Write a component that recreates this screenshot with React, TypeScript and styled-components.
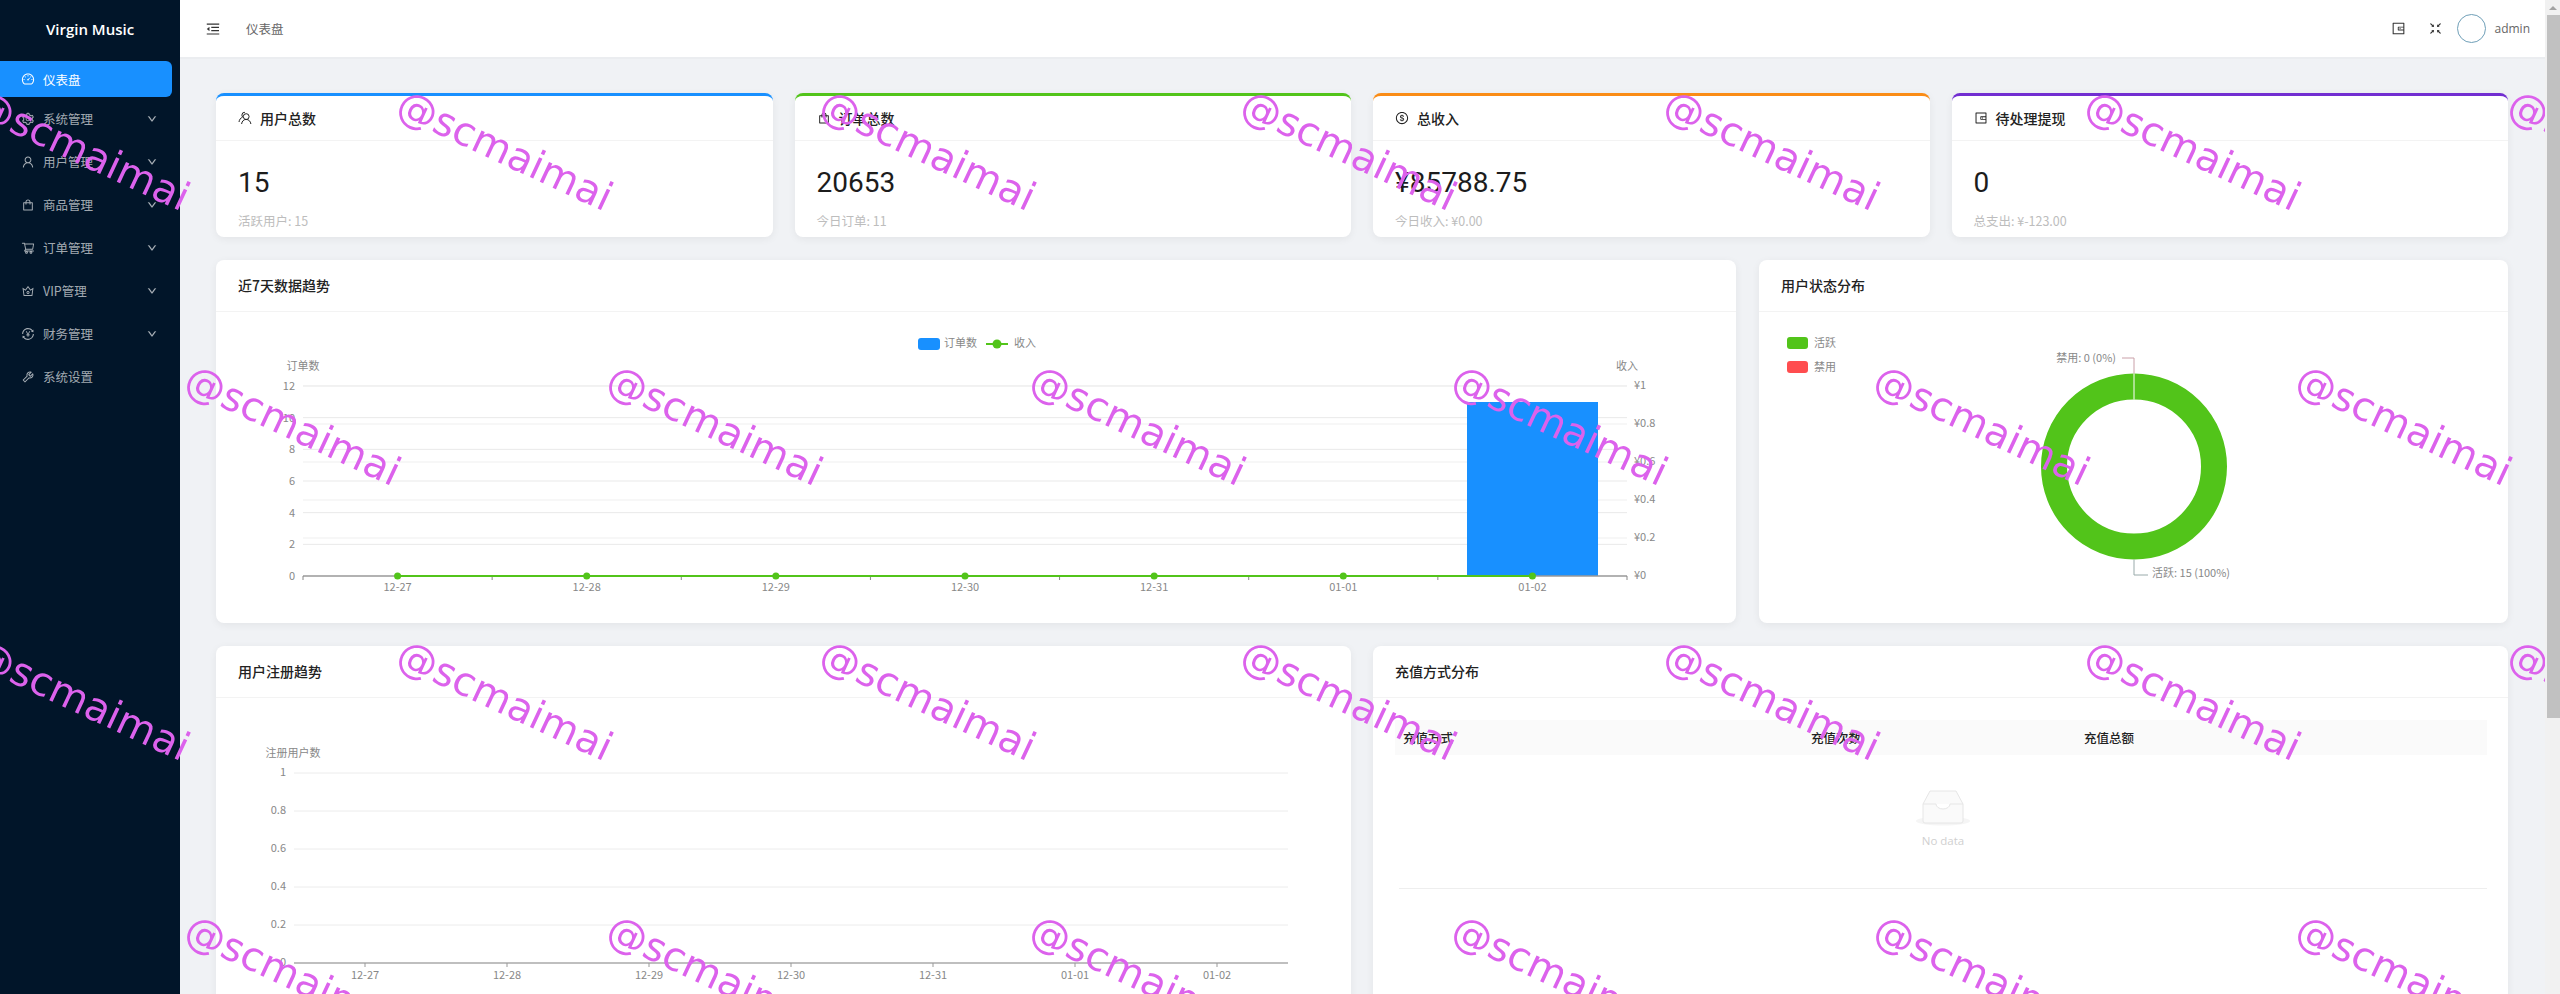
import React from "react";
import styled, { createGlobalStyle } from "styled-components";
import {
  AiOutlineDashboard, AiOutlineSetting, AiOutlineUser, AiOutlineShopping, AiOutlineShoppingCart,
  AiOutlineCrown, AiOutlineTransaction, AiOutlineTool, AiOutlineDown, AiOutlineMenuFold,
  AiOutlineWallet, AiOutlineFullscreenExit, AiOutlineDollar,
} from "react-icons/ai";

const CJK = `"Noto Sans CJK SC", "Noto Sans", sans-serif`;
const UI = `"Open Sans", "Noto Sans CJK SC", sans-serif`;

const Global = createGlobalStyle`
  * { box-sizing: border-box; }
  html, body { margin: 0; height: 100%; overflow: hidden; background: #f0f2f5; }
  body { font-family: ${CJK}; }
`;

const Page = styled.div`
  height: 100vh;
  overflow: hidden;
  display: flex;
  align-items: flex-start;
  background: #f0f2f5;
`;

const Rail = styled.div`
  width: 15px;
  height: 100vh;
  flex: none;
  background: #f1f1f1;
  display: flex;
  flex-direction: column;
  align-items: flex-end;
`;
const RailArrow = styled.span`
  width: 15px;
  height: 15px;
  flex: none;
  display: flex;
  align-items: center;
  justify-content: center;
  &::before {
    content: "";
    border-left: 4px solid transparent;
    border-right: 4px solid transparent;
    border-bottom: 4px solid #a3a3a3;
  }
`;
const RailThumb = styled.span`
  width: 13px;
  height: 703px;
  flex: none;
  background: #c1c1c1;
`;

const Sidebar = styled.aside`
  width: 180px;
  flex: none;
  height: 100vh;
  background: #011529;
  display: flex;
  flex-direction: column;
`;
const Logo = styled.div`
  height: 61px;
  padding-bottom: 3px;
  display: flex;
  align-items: center;
  justify-content: center;
  color: #fff;
  font: 600 15px ${UI};
`;
const MenuList = styled.nav`
  display: flex;
  flex-direction: column;
`;
const MenuItem = styled.div<{ $active?: boolean }>`
  height: ${(p) => (p.$active ? 36 : 39)}px;
  margin: ${(p) => (p.$active ? "0 8px 2px 0" : "0 8px 4px 0")};
  padding: 0 0 0 21px;
  display: flex;
  align-items: center;
  border-radius: ${(p) => (p.$active ? "0 6px 6px 0" : "0")};
  background: ${(p) => (p.$active ? "#1890ff" : "transparent")};
  color: ${(p) => (p.$active ? "#fff" : "rgba(255,255,255,.65)")};
  font-size: 12.5px;
  & > svg:first-child { font-size: 14px; margin-right: 8px; flex: none; }
`;
const Chevron = styled(AiOutlineDown)`
  margin-left: auto;
  margin-right: 15px;
  font-size: 10px;
  stroke: currentColor;
  stroke-width: 50;
`;

const Main = styled.div`
  flex: 1;
  min-width: 0;
  height: 100vh;
  overflow: hidden;
  display: flex;
  flex-direction: column;
`;
const Header = styled.header`
  height: 59px;
  flex: none;
  background: #fff;
  border-bottom: 2px solid #ebedf0;
  display: flex;
  align-items: center;
  padding: 0 15px 0 25px;
  color: #555;
`;
const FoldIcon = styled(AiOutlineMenuFold)`
  font-size: 16px;
  color: #333;
  margin-right: 25px;
`;
const Crumb = styled.span`
  font-size: 12.5px;
  color: #666;
`;
const HeaderRight = styled.div`
  margin-left: auto;
  display: flex;
  align-items: center;
`;
const HeaderIcon = styled.span<{ $gap: number }>`
  display: flex;
  font-size: 15px;
  color: #333;
  margin-right: ${(p) => p.$gap}px;
`;
const Avatar = styled.span`
  width: 29px;
  height: 29px;
  border-radius: 50%;
  border: 1px solid #6f9fb8;
  background: #fff;
  margin-right: 8px;
`;
const UserName = styled.span`
  font: 12px ${UI};
  color: #666;
`;

const Content = styled.main`
  padding: 34px 37px 36px 36px;
  display: flex;
  flex-direction: column;
  gap: 23px;
`;
const StatRow = styled.section`
  display: grid;
  grid-template-columns: repeat(4, 1fr);
  gap: 22px;
`;
const ChartRow = styled.section`
  display: grid;
  grid-template-columns: 1520px 1fr;
  gap: 23px;
`;
const BottomRow = styled.section`
  display: grid;
  grid-template-columns: 1fr 1fr;
  gap: 22px;
`;
const Card = styled.div<{ $accent?: string; $height: number }>`
  height: ${(p) => p.$height}px;
  background: #fff;
  border-radius: 8px;
  box-shadow: 0 2px 8px rgba(0, 0, 0, 0.06);
  ${(p) => (p.$accent ? `border-top: 3px solid ${p.$accent};` : "")}
  display: flex;
  flex-direction: column;
  overflow: hidden;
`;
const CardHead = styled.div<{ $height: number; $lift?: number }>`
  height: ${(p) => p.$height}px;
  flex: none;
  padding: 0 22px ${(p) => p.$lift ?? 0}px;
  display: flex;
  align-items: center;
  gap: 8px;
  border-bottom: 1px solid #f3f3f3;
  color: #222;
  font-size: 14px;
  font-weight: 500;
  & svg { font-size: 14px; }
`;
const StatBody = styled.div`
  padding: 24px 22px 0;
`;
const StatValue = styled.div`
  font: 400 28px/36px "Roboto", ${CJK};
  color: #1c1c1c;
`;
const StatNote = styled.div`
  margin-top: 12px;
  font-size: 12.5px;
  line-height: 16px;
  color: #bdbdbd;
`;
const ChartSvg = styled.svg`
  display: block;
  flex: 1;
  width: 100%;
  height: 100%;
`;
const ChartText = styled.text`
  font-family: ${CJK};
  font-size: 11px;
  fill: #888;
`;
const TableWrap = styled.div`
  padding: 22px 21px 0 22px;
`;
const TableHead = styled.div`
  height: 35px;
  display: grid;
  grid-template-columns: 408px 273px 1fr;
  align-items: center;
  background: #fafafa;
  font-size: 12.5px;
  font-weight: 500;
  color: #222;
  & > span { padding-left: 8px; }
`;
const Empty = styled.div`
  height: 134px;
  margin-left: 4px;
  border-bottom: 1px solid #eee;
  padding-top: 35px;
  display: flex;
  flex-direction: column;
  align-items: center;
  gap: 7px;
  font: 11.5px ${UI};
  color: #d0d0d0;
`;

const Watermarks = styled.div`
  position: fixed;
  left: 0;
  top: 0;
  width: 2545px;
  height: 100vh;
  overflow: hidden;
  pointer-events: none;
`;
const Mark = styled.span.attrs<{ $x: number; $y: number }>((p) => ({
  style: { left: p.$x, top: p.$y },
}))<{ $x: number; $y: number }>`
  position: absolute;
  transform: translate(-50%, -50%) rotate(25deg);
  font: 40px "DejaVu Sans", sans-serif;
  line-height: 1;
  white-space: nowrap;
  color: #dc62ec;
`;

const PeopleIcon = () => (
  <svg width="14" height="14" viewBox="0 0 14 14" fill="none" stroke="currentColor" strokeWidth="1">
    <circle cx="8.2" cy="5.6" r="2.9" />
    <path d="M3.6 13c.3-2.7 2.1-4.6 4.6-4.6s4.3 1.900 4.700 4.600" />
    <path d="M6.900 1.300A2.800 2.800 0 0 0 3.900 4c0 .8.3 1.500.8 2C2.600 6.900 1.300 8.700 1 11" />
  </svg>
);

const menu = [
  { icon: <AiOutlineDashboard />, label: "仪表盘", active: true },
  { icon: <AiOutlineSetting />, label: "系统管理", more: true },
  { icon: <AiOutlineUser />, label: "用户管理", more: true },
  { icon: <AiOutlineShopping />, label: "商品管理", more: true },
  { icon: <AiOutlineShoppingCart />, label: "订单管理", more: true },
  { icon: <AiOutlineCrown />, label: "VIP管理", more: true },
  { icon: <AiOutlineTransaction />, label: "财务管理", more: true },
  { icon: <AiOutlineTool />, label: "系统设置" },
];

const stats = [
  { accent: "#1890ff", icon: <PeopleIcon />, title: "用户总数", value: "15", note: "活跃用户: 15" },
  { accent: "#52c41a", icon: <AiOutlineShopping />, title: "订单总数", value: "20653", note: "今日订单: 11" },
  { accent: "#fa8c16", icon: <AiOutlineDollar />, title: "总收入", value: "¥85788.75", note: "今日收入: ¥0.00" },
  { accent: "#722ed1", icon: <AiOutlineWallet />, title: "待处理提现", value: "0", note: "总支出: ¥-123.00" },
];

const Trend = () => {
  const ox = 216, oy = 312;
  const X0 = 303 - ox, X1 = 1627 - ox, band = (X1 - X0) / 7;
  const Y0 = 576 - oy, Y1 = 386 - oy;
  const days = ["12-27", "12-28", "12-29", "12-30", "12-31", "01-01", "01-02"];
  const centers = days.map((_, i) => X0 + band * (i + 0.5));
  return (
    <ChartSvg>
      <rect x={918 - ox} y={338 - oy} width={22} height={12} rx={3} fill="#1890ff" />
      <ChartText x={944 - ox} y={347 - oy}>订单数</ChartText>
      <line x1={986 - ox} x2={1008 - ox} y1={344 - oy} y2={344 - oy} stroke="#52c41a" strokeWidth={2} />
      <circle cx={997 - ox} cy={344 - oy} r={4.5} fill="#52c41a" />
      <ChartText x={1014 - ox} y={347 - oy}>收入</ChartText>
      <ChartText x={X0} y={370 - oy} textAnchor="middle">订单数</ChartText>
      <ChartText x={X1} y={370 - oy} textAnchor="middle">收入</ChartText>
      {[0, 1, 2, 3, 4, 5, 6].map((i) => {
        const y = Y1 + ((Y0 - Y1) / 6) * i;
        return (
          <React.Fragment key={i}>
            {i < 6 && <line x1={X0} x2={X1} y1={y} y2={y} stroke="#e9e9e9" />}
            <ChartText x={295 - ox} y={y + 4} textAnchor="end">{12 - i * 2}</ChartText>
          </React.Fragment>
        );
      })}
      {[0, 1, 2, 3, 4, 5].map((i) => {
        const y = Y1 + ((Y0 - Y1) / 5) * i;
        return (
          <React.Fragment key={i}>
            {i < 5 && <line x1={X0} x2={X1} y1={y} y2={y} stroke="#efefef" />}
            <ChartText x={1634 - ox} y={y + 3}>{`¥${[1, 0.8, 0.6, 0.4, 0.2, 0][i]}`}</ChartText>
          </React.Fragment>
        );
      })}
      <rect x={1467 - ox} y={402 - oy} width={131} height={Y0 - (402 - oy)} fill="#1890ff" />
      <line x1={X0} x2={X1} y1={Y0} y2={Y0} stroke="#999" strokeWidth={1.5} />
      {[0, 1, 2, 3, 4, 5, 6, 7].map((i) => (
        <line key={i} x1={X0 + band * i} x2={X0 + band * i} y1={Y0} y2={Y0 + 4} stroke="#888" />
      ))}
      <line x1={centers[0]} x2={centers[6]} y1={Y0} y2={Y0} stroke="#52c41a" strokeWidth={2} />
      {centers.map((c, i) => (
        <React.Fragment key={i}>
          <circle cx={c} cy={Y0} r={3.5} fill="#52c41a" />
          <ChartText x={c} y={Y0 + 15} textAnchor="middle">{days[i]}</ChartText>
        </React.Fragment>
      ))}
    </ChartSvg>
  );
};

const Donut = () => {
  const ox = 1759, oy = 312;
  const cx = 2134 - ox, cy = 466.5 - oy;
  return (
    <ChartSvg>
      <rect x={1787 - ox} y={337 - oy} width={21} height={12} rx={3} fill="#52c41a" />
      <ChartText x={1814 - ox} y={347 - oy}>活跃</ChartText>
      <rect x={1787 - ox} y={361 - oy} width={21} height={12} rx={3} fill="#ff4d4f" />
      <ChartText x={1814 - ox} y={371 - oy}>禁用</ChartText>
      <circle cx={cx} cy={cy} r={80} fill="none" stroke="#52c41a" strokeWidth={26} />
      <line x1={cx} x2={cx} y1={cy - 93} y2={cy - 67} stroke="#fff" strokeWidth={1} />
      <path d={`M${cx} ${cy - 93}V${358 - oy}H${2122 - ox}`} fill="none" stroke="#c9a0a8" />
      <ChartText x={2116 - ox} y={362 - oy} textAnchor="end">禁用: 0 (0%)</ChartText>
      <path d={`M${cx} ${cy + 93}V${575 - oy}H${2148 - ox}`} fill="none" stroke="#9aa" />
      <ChartText x={2152 - ox} y={577 - oy}>活跃: 15 (100%)</ChartText>
    </ChartSvg>
  );
};

const Register = () => {
  const ox = 216, oy = 698;
  const X0 = 294 - ox, band = 142;
  const Y0 = 963 - oy;
  const days = ["12-27", "12-28", "12-29", "12-30", "12-31", "01-01", "01-02"];
  return (
    <ChartSvg>
      <ChartText x={293 - ox} y={757 - oy} textAnchor="middle">注册用户数</ChartText>
      {[1, 0.8, 0.6, 0.4, 0.2, 0].map((v, i) => {
        const y = 773 - oy + 38 * i;
        return (
          <React.Fragment key={v}>
            {i < 5 && <line x1={X0} x2={X0 + band * 7} y1={y} y2={y} stroke="#ececec" />}
            <ChartText x={286 - ox} y={y + 3} textAnchor="end">{v}</ChartText>
          </React.Fragment>
        );
      })}
      <line x1={X0} x2={X0 + band * 7} y1={Y0} y2={Y0} stroke="#aaa" strokeWidth={1.5} />
      {days.map((d, i) => (
        <React.Fragment key={d}>
          <line x1={X0 + band * (i + 0.5)} x2={X0 + band * (i + 0.5)} y1={Y0} y2={Y0 + 4} stroke="#999" />
          <ChartText x={X0 + band * (i + 0.5)} y={Y0 + 16} textAnchor="middle">{d}</ChartText>
        </React.Fragment>
      ))}
    </ChartSvg>
  );
};

const EmptyIcon = () => (
  <svg width="54" height="36" viewBox="0 0 54 36" fill="none">
    <ellipse cx="27" cy="31" rx="27" ry="4.5" fill="#f5f5f5" />
    <path d="M7 14L14 1H40L47 14V31a2 2 0 0 1-2 2H9a2 2 0 0 1-2-2Z" fill="#fafafa" stroke="#e6e6e6" />
    <path d="M7 14H20a7 5 0 0 0 14 0H47" fill="#fff" stroke="#e6e6e6" />
  </svg>
);

const topXs = [-26, 397, 820, 1241, 1664, 2085, 2508];
const lowXs = [185, 607, 1030, 1452, 1874, 2296];
const marks = [
  ...topXs.map((x) => [x + 108, 150]),
  ...lowXs.map((x) => [x + 108, 425]),
  ...topXs.map((x) => [x + 108, 700]),
  ...lowXs.map((x) => [x + 108, 975]),
];

export default function App() {
  return (
    <Page>
      <Global />
      <Sidebar>
        <Logo>Virgin Music</Logo>
        <MenuList>
          {menu.map((m) => (
            <MenuItem key={m.label} $active={m.active}>
              {m.icon}
              <span>{m.label}</span>
              {m.more && <Chevron />}
            </MenuItem>
          ))}
        </MenuList>
      </Sidebar>
      <Main>
        <Header>
          <FoldIcon />
          <Crumb>仪表盘</Crumb>
          <HeaderRight>
            <HeaderIcon $gap={22}><AiOutlineWallet /></HeaderIcon>
            <HeaderIcon $gap={14}><AiOutlineFullscreenExit /></HeaderIcon>
            <Avatar />
            <UserName>admin</UserName>
          </HeaderRight>
        </Header>
        <Content>
          <StatRow>
            {stats.map((s) => (
              <Card key={s.title} $accent={s.accent} $height={144}>
                <CardHead $height={45}>{s.icon}<span>{s.title}</span></CardHead>
                <StatBody>
                  <StatValue>{s.value}</StatValue>
                  <StatNote>{s.note}</StatNote>
                </StatBody>
              </Card>
            ))}
          </StatRow>
          <ChartRow>
            <Card $height={363}>
              <CardHead $height={52} $lift={2}><span>近7天数据趋势</span></CardHead>
              <Trend />
            </Card>
            <Card $height={363}>
              <CardHead $height={52} $lift={2}><span>用户状态分布</span></CardHead>
              <Donut />
            </Card>
          </ChartRow>
          <BottomRow>
            <Card $height={380}>
              <CardHead $height={52} $lift={2}><span>用户注册趋势</span></CardHead>
              <Register />
            </Card>
            <Card $height={380}>
              <CardHead $height={52} $lift={2}><span>充值方式分布</span></CardHead>
              <TableWrap>
                <TableHead>
                  <span>充值方式</span>
                  <span>充值次数</span>
                  <span>充值总额</span>
                </TableHead>
                <Empty>
                  <EmptyIcon />
                  <span>No data</span>
                </Empty>
              </TableWrap>
            </Card>
          </BottomRow>
        </Content>
      </Main>
      <Rail>
        <RailArrow />
        <RailThumb />
      </Rail>
      <Watermarks>
        {marks.map(([x, y]) => (
          <Mark key={`${x}-${y}`} $x={x} $y={y}>@scmaimai</Mark>
        ))}
      </Watermarks>
    </Page>
  );
}
